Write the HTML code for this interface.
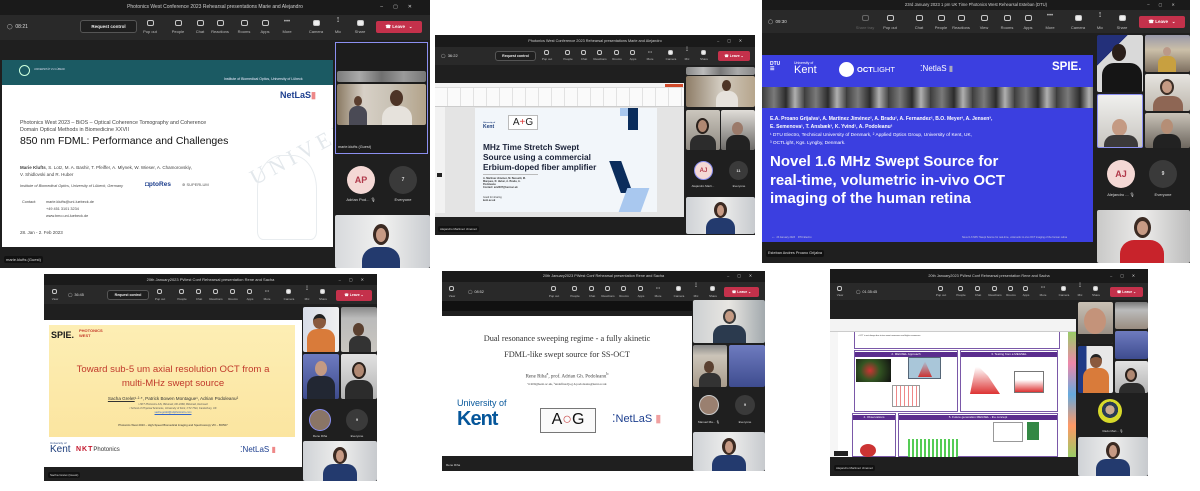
<!DOCTYPE html>
<html><head><meta charset="utf-8">
<style>
*{margin:0;padding:0;box-sizing:border-box}
body{width:1200px;height:491px;background:#fff;position:relative;overflow:hidden;font-family:"Liberation Sans",sans-serif}
.p{position:absolute;background:#1f1f1f;overflow:hidden}
.a{position:absolute}
.t{position:absolute;left:0;right:0;top:0;background:#1a1a1a;color:#cfcfcf;text-align:center;white-space:nowrap}
.bar{position:absolute;left:0;right:0;background:#292929}
.i{position:absolute;width:7px;height:6px;border:1px solid #c8c8c8;border-radius:2px;margin-left:-3px}
.l{position:absolute;font-size:4px;color:#bdbdbd;transform:translateX(-50%);white-space:nowrap;text-decoration:none;line-height:5px}
.lv{position:absolute;background:#c4314b;border-radius:2px;color:#fff;font-weight:bold;text-align:center}
.rc{position:absolute;border:1px solid #555;border-radius:3px;background:#1f1f1f;color:#eee;font-weight:bold;text-align:center;white-space:nowrap}
.v{position:absolute;overflow:hidden;border-radius:2px}
.hd{position:absolute;border-radius:50%}
.nm{position:absolute;background:#111;color:#ddd;white-space:nowrap;border-radius:2px;padding:0 2px}
.av{position:absolute;border-radius:50%;text-align:center;font-weight:bold}
.tl{position:absolute;font-size:4px;color:#ddd;transform:translateX(-50%);white-space:nowrap}
.w{position:absolute;white-space:nowrap}
</style></head><body>

<!-- PANEL 1 -->
<div class="p" style="left:0;top:0;width:430px;height:268px">
 <div class="t" style="height:15px;font-size:5px;line-height:15px">Photonics West Conference 2023 Rehearsal presentations Marie and Alejandro <span style="position:absolute;right:8px;letter-spacing:10px">–▢✕</span></div>
 <div class="bar" style="top:15px;height:25px"></div>
 <div class="w" style="left:7px;top:24px;font-size:5px;color:#ddd">◯ &nbsp;08:21</div>
 <div class="rc" style="left:80px;top:20px;width:57px;height:13px;font-size:4.5px;line-height:11px">Request control</div>
 <b class="i" style="left:150px;top:20px"></b><s class="l" style="left:150px;top:29px">Pop out</s>
 <b class="i" style="left:178px;top:20px"></b><s class="l" style="left:178px;top:29px">People</s>
 <b class="i" style="left:200px;top:20px"></b><s class="l" style="left:200px;top:29px">Chat</s>
 <b class="i" style="left:220px;top:20px"></b><s class="l" style="left:220px;top:29px">Reactions</s>
 <b class="i" style="left:244px;top:20px"></b><s class="l" style="left:244px;top:29px">Rooms</s>
 <b class="i" style="left:265px;top:20px"></b><s class="l" style="left:265px;top:29px">Apps</s>
 <s class="l" style="left:287px;top:20px;font-size:6px">•••</s><s class="l" style="left:287px;top:29px">More</s>
 <b class="i" style="left:316px;top:20px;background:#eee"></b><s class="l" style="left:316px;top:29px">Camera</s>
 <s class="l" style="left:338px;top:18px;font-size:7px">⟟</s><s class="l" style="left:338px;top:29px">Mic</s>
 <b class="i" style="left:360px;top:20px;background:#eee"></b><s class="l" style="left:360px;top:29px">Share</s>
 <div class="lv" style="left:376px;top:21px;width:46px;height:12px;font-size:4.5px;line-height:12px">☎ Leave &nbsp; ⌄</div>
 <div class="a" style="left:2px;top:60px;width:331px;height:187px;background:#fff;overflow:hidden">
  <div class="a" style="left:0;top:0;width:331px;height:25px;background:#1b5a63"></div>
  <div class="hd" style="left:17px;top:5px;width:11px;height:11px;border:1px solid #cfd;"></div>
  <div class="w" style="left:32px;top:8px;font-size:2.5px;color:#dde">UNIVERSITÄT ZU LÜBECK</div>
  <div class="w" style="left:222px;top:17px;font-size:3.5px;color:#eef">Institute of Biomedical Optics, University of Lübeck</div>
  <div class="w" style="left:278px;top:30px;font-size:9px;color:#1d3f8f;font-weight:bold">NetLaS<span style="color:#e88">▮</span></div>
  <div class="w" style="left:238px;top:60px;font-size:22px;color:#e3e8ec;font-family:'Liberation Serif',serif;transform:rotate(-28deg);letter-spacing:5px">UNIVERSITAS</div>
  <div class="a" style="left:255px;top:95px;width:60px;height:85px;border:1px solid #e8ecef;border-radius:40% 40% 10% 10%"></div>
  <div class="w" style="left:18px;top:60px;font-size:5.3px;color:#444;line-height:7px">Photonics West 2023 – BiOS – Optical Coherence Tomography and Coherence<br>Domain Optical Methods in Biomedicine XXVII</div>
  <div class="w" style="left:18px;top:75px;font-size:10.5px;color:#111">850 nm FDML: Performance and Challenges</div>
  <div class="w" style="left:18px;top:104px;font-size:4.5px;color:#444;line-height:7px"><b>Marie Klufts</b>, S. Lotz, M. A. Bashir, T. Pfeiffer, A. Mlynek, W. Wieser, A. Chamorovskiy,<br>V. Shidlovski and R. Huber</div>
  <div class="w" style="left:18px;top:124px;font-size:3.8px;color:#444;font-style:italic">Institute of Biomedical Optics, University of Lübeck, Germany</div>
  <div class="w" style="left:143px;top:121px;font-size:6.5px;color:#1a3c8c;font-weight:bold">◘ptoRes</div>
  <div class="w" style="left:180px;top:122px;font-size:4px;color:#555">⊚ SUPERLUM</div>
  <div class="w" style="left:20px;top:139px;font-size:3.8px;color:#444;line-height:7px">Contact:</div>
  <div class="w" style="left:44px;top:139px;font-size:3.8px;color:#444;line-height:7px">marie.klufts@uni-luebeck.de<br>+49 451 3101 3234<br>www.bmo.uni-luebeck.de</div>
  <div class="w" style="left:18px;top:170px;font-size:4.5px;color:#444">28. Jan - 2. Feb 2023</div>
 </div>
 <div class="nm" style="left:4px;top:256px;font-size:4px;line-height:7px">marie.klufts (Guest)</div>
 <div class="a" style="left:335px;top:42px;width:93px;height:112px;border:1px solid #8b8ff0;background:#1c1c1c"></div>
 <div class="v" style="left:337px;top:71px;width:89px;height:11px;background:linear-gradient(90deg,#7b7b7b,#aaa,#6f6f6f,#9a9a9a,#777)"></div>
 <div class="v" style="left:337px;top:84px;width:89px;height:41px;background:linear-gradient(90deg,#8a7a63,#d7d0c6 30%,#c9c2b5 60%,#b3a38a)">
  <div class="hd" style="left:17px;top:12px;width:8px;height:10px;background:#5a3e2e"></div>
  <div class="a" style="left:12px;top:22px;width:18px;height:20px;background:#4a4a55;border-radius:8px 8px 0 0"></div>
  <div class="hd" style="left:53px;top:6px;width:13px;height:16px;background:#4d3426"></div>
  <div class="a" style="left:45px;top:22px;width:30px;height:20px;background:#e6e2dc;border-radius:12px 12px 0 0"></div>
 </div>
 <div class="w" style="left:338px;top:145px;font-size:3.8px;color:#ddd">marie.klufts (Guest)</div>
 <div class="av" style="left:347px;top:166px;width:28px;height:28px;background:#f4d8d5;color:#b1394a;font-size:9px;line-height:28px">AP</div>
 <div class="av" style="left:389px;top:166px;width:28px;height:28px;background:#3a3a3a;color:#ddd;font-size:5px;line-height:28px">7</div>
 <div class="tl" style="left:361px;top:197px">Adrian Pod... 🎙</div>
 <div class="tl" style="left:403px;top:197px">Everyone</div>
 <div class="v" style="left:335px;top:215px;width:95px;height:53px;background:linear-gradient(90deg,#d7d9dc,#f1f1f0 50%,#c9ccd0)">
  <div class="hd" style="left:38px;top:9px;width:16px;height:21px;background:#3b2a22"></div>
  <div class="hd" style="left:41px;top:13px;width:10px;height:14px;background:#c79a84"></div>
  <div class="a" style="left:27px;top:32px;width:38px;height:22px;background:#233a6e;border-radius:14px 14px 0 0"></div>
 </div>
</div>

<!-- PANEL 2 -->
<div class="p" style="left:435px;top:35px;width:320px;height:200px">
 <div class="t" style="height:12px;font-size:3.8px;line-height:12px">Photonics West Conference 2023 Rehearsal presentations Marie and Alejandro<span style="position:absolute;right:5px;letter-spacing:8px">–▢✕</span></div>
 <div class="bar" style="top:12px;height:18px"></div>
 <div class="w" style="left:6px;top:18px;font-size:4px;color:#ddd">◯ &nbsp;36:22</div>
 <div class="rc" style="left:60px;top:16px;width:41px;height:10px;font-size:3.5px;line-height:8px">Request control</div>
 <b class="i" style="left:112px;top:15px;width:5px;height:5px"></b><s class="l" style="left:112px;top:22px;font-size:3px">Pop out</s>
 <b class="i" style="left:133px;top:15px;width:5px;height:5px"></b><s class="l" style="left:133px;top:22px;font-size:3px">People</s>
 <b class="i" style="left:149px;top:15px;width:5px;height:5px"></b><s class="l" style="left:149px;top:22px;font-size:3px">Chat</s>
 <b class="i" style="left:165px;top:15px;width:5px;height:5px"></b><s class="l" style="left:165px;top:22px;font-size:3px">Reactions</s>
 <b class="i" style="left:182px;top:15px;width:5px;height:5px"></b><s class="l" style="left:182px;top:22px;font-size:3px">Rooms</s>
 <b class="i" style="left:198px;top:15px;width:5px;height:5px"></b><s class="l" style="left:198px;top:22px;font-size:3px">Apps</s>
 <s class="l" style="left:215px;top:14px;font-size:4px">•••</s><s class="l" style="left:215px;top:22px;font-size:3px">More</s>
 <b class="i" style="left:236px;top:15px;width:5px;height:5px;background:#eee"></b><s class="l" style="left:236px;top:22px;font-size:3px">Camera</s>
 <s class="l" style="left:252px;top:13px;font-size:6px">⟟</s><s class="l" style="left:252px;top:22px;font-size:3px">Mic</s>
 <b class="i" style="left:269px;top:15px;width:5px;height:5px;background:#eee"></b><s class="l" style="left:269px;top:22px;font-size:3px">Share</s>
 <div class="lv" style="left:283px;top:16px;width:32px;height:10px;font-size:3.5px;line-height:10px">☎ Leave ⌄</div>
 <div class="a" style="left:0;top:48px;width:249px;height:134px;background:#e4e4e4">
  <div class="a" style="left:0;top:0;width:249px;height:5px;background:#f3f3f3;border-bottom:1px solid #ddd"></div>
  <div class="a" style="left:230px;top:1px;width:18px;height:3px;background:#d04a2a"></div>
  <div class="a" style="left:0;top:5px;width:249px;height:19px;background:#fafafa;border-bottom:1px solid #ccc;background-image:repeating-linear-gradient(90deg,transparent 0 12px,#e2e2e2 12px 13px)"></div>
  <div class="a" style="left:0;top:24px;width:10px;height:106px;background:#f2f2f2"></div>
  <div class="a" style="left:2px;top:90px;width:5px;height:4px;background:#222"></div>
  <div class="a" style="left:40px;top:25px;width:182px;height:104px;background:#f2f6fa">
   <div class="w" style="left:8px;top:12px;font-size:5px;color:#1c3c7a;font-weight:bold;line-height:4px"><span style="font-size:2px">University of</span><br>Kent</div>
   <div class="a" style="left:33px;top:7px;width:30px;height:15px;border:1px solid #bbb;background:#fff;font-size:10px;line-height:13px;text-align:center;color:#222">A<span style="color:#d33">+</span>G</div>
   <div class="w" style="left:8px;top:34px;font-size:8.3px;font-weight:bold;color:#1a2238;line-height:10px">MHz Time Stretch Swept<br>Source using a commercial<br>Erbium-doped fiber amplifier</div>
   <div class="a" style="left:8px;top:66px;width:55px;height:1px;background:#bbb"></div>
   <div class="w" style="left:8px;top:69px;font-size:2.5px;color:#333;line-height:3px;font-weight:bold">A. Martinez Jiménez, M. Bassetti, M.<br>Marques, R. Huber, A. Bradu, A.<br>Podoleanu<br>Contact: am2037@kent.ac.uk</div>
   <div class="w" style="left:8px;top:88px;font-size:2.5px;color:#333;line-height:3px">Good for sharing<br><b>kent.ac.uk</b></div>
   <div class="a" style="left:153px;top:0;width:10px;height:22px;background:#0b2d5c"></div>
   <div class="a" style="left:145px;top:0;width:8px;height:8px;background:#a9c8ef"></div>
   <div class="a" style="left:140px;top:53px;width:12px;height:32px;background:#0b2d5c;transform:skewX(20deg)"></div>
   <div class="a" style="left:148px;top:80px;width:22px;height:24px;background:#a9c8ef;transform:skewX(-20deg)"></div>
  </div>
 </div>
 <div class="nm" style="left:3px;top:191px;font-size:3px;line-height:6px">Alejandro Martinez Jiménez</div>
 <div class="v" style="left:251px;top:32px;width:69px;height:8px;background:linear-gradient(90deg,#888,#bbb,#777,#aaa,#888)"></div>
 <div class="v" style="left:251px;top:41px;width:69px;height:31px;background:linear-gradient(90deg,#8e7d67,#d2cbc0,#b6a58c)">
  <div class="hd" style="left:36px;top:4px;width:9px;height:11px;background:#4d3426"></div>
  <div class="a" style="left:30px;top:15px;width:22px;height:16px;background:#e6e2dc;border-radius:9px 9px 0 0"></div>
 </div>
 <div class="v" style="left:251px;top:75px;width:34px;height:40px;background:linear-gradient(#cbc6bd,#8f8a82)">
  <div class="hd" style="left:10px;top:8px;width:13px;height:16px;background:#b08872;border:2px solid #2a211c"></div>
  <div class="a" style="left:4px;top:25px;width:26px;height:15px;background:#2c2c2c;border-radius:9px 9px 0 0"></div>
 </div>
 <div class="v" style="left:286px;top:75px;width:34px;height:40px;background:linear-gradient(#e0ddd8,#6d6b68)">
  <div class="hd" style="left:11px;top:12px;width:11px;height:13px;background:#9b7a6a"></div>
  <div class="a" style="left:5px;top:25px;width:24px;height:15px;background:#222;border-radius:9px 9px 0 0"></div>
 </div>
 <div class="av" style="left:259px;top:126px;width:19px;height:19px;background:#f4d8d5;color:#b1394a;font-size:6px;line-height:19px;border:1px solid #8b8ff0">AJ</div>
 <div class="av" style="left:294px;top:126px;width:19px;height:19px;background:#3a3a3a;color:#ddd;font-size:4px;line-height:19px">11</div>
 <div class="tl" style="left:268px;top:149px;font-size:3px">Alejandro Marti...</div>
 <div class="tl" style="left:304px;top:149px;font-size:3px">Everyone</div>
 <div class="v" style="left:251px;top:162px;width:69px;height:37px;background:linear-gradient(90deg,#cfd2d6,#eeeeed,#c7cace)">
  <div class="hd" style="left:28px;top:5px;width:13px;height:16px;background:#3b2a22"></div>
  <div class="hd" style="left:31px;top:8px;width:7px;height:11px;background:#c79a84"></div>
  <div class="a" style="left:20px;top:21px;width:29px;height:16px;background:#233a6e;border-radius:10px 10px 0 0"></div>
 </div>
</div>

<!-- PANEL 3 -->
<div class="p" style="left:762px;top:0;width:428px;height:263px">
 <div class="t" style="height:10px;font-size:4.2px;line-height:10px">23rd January 2023 1 pm UK Time Photonics West Rehearsal Esteban (DTU)<span style="position:absolute;right:6px;letter-spacing:9px">–▢✕</span></div>
 <div class="bar" style="top:10px;height:23px"></div>
 <div class="w" style="left:6px;top:19px;font-size:4.5px;color:#ddd">◯ &nbsp;09:30</div>
 <b class="i" style="left:103px;top:15px;border-color:#666"></b><s class="l" style="left:103px;top:25px;color:#666">Share tray</s>
 <b class="i" style="left:128px;top:15px"></b><s class="l" style="left:128px;top:25px">Pop out</s>
 <b class="i" style="left:157px;top:15px"></b><s class="l" style="left:157px;top:25px">Chat</s>
 <b class="i" style="left:179px;top:15px"></b><s class="l" style="left:179px;top:25px">People</s>
 <b class="i" style="left:199px;top:15px"></b><s class="l" style="left:199px;top:25px">Reactions</s>
 <b class="i" style="left:222px;top:15px"></b><s class="l" style="left:222px;top:25px">View</s>
 <b class="i" style="left:245px;top:15px"></b><s class="l" style="left:245px;top:25px">Rooms</s>
 <b class="i" style="left:266px;top:15px"></b><s class="l" style="left:266px;top:25px">Apps</s>
 <s class="l" style="left:288px;top:14px;font-size:6px">•••</s><s class="l" style="left:288px;top:25px">More</s>
 <b class="i" style="left:316px;top:15px;background:#eee"></b><s class="l" style="left:316px;top:25px">Camera</s>
 <s class="l" style="left:338px;top:13px;font-size:7px">⟟</s><s class="l" style="left:338px;top:25px">Mic</s>
 <b class="i" style="left:360px;top:15px;background:#eee"></b><s class="l" style="left:360px;top:25px">Share</s>
 <div class="lv" style="left:377px;top:16px;width:46px;height:12px;font-size:4.5px;line-height:12px">☎ Leave &nbsp; ⌄</div>
 <div class="a" style="left:0;top:55px;width:331px;height:187px;background:#3b3fe0;overflow:hidden">
  <div class="w" style="left:8px;top:7px;font-size:5px;color:#fff;font-weight:bold;line-height:5px">DTU<br>☰</div>
  <div class="w" style="left:32px;top:6px;font-size:3.5px;color:#fff;line-height:4px">University of<br><span style="font-size:11px;line-height:11px">Kent</span></div>
  <div class="hd" style="left:77px;top:7px;width:15px;height:15px;background:#fff"></div>
  <div class="w" style="left:95px;top:10px;font-size:7.5px;color:#fff;font-weight:bold">OCT<span style="font-weight:normal">LIGHT</span></div>
  <div class="w" style="left:158px;top:9px;font-size:8px;color:#fff">⁚NetlaS <span style="color:#aab">▮</span></div>
  <div class="w" style="left:290px;top:6px;font-size:11.5px;color:#fff;font-weight:bold">SPIE.</div>
  <div class="a" style="left:0;top:32px;width:331px;height:21px;background:repeating-linear-gradient(90deg,#3c3c3c 0,#7a7a7a 12px,#2b2b2b 24px,#b0b0b0 33px,#4a4a4a 42px)"></div>
  <div class="w" style="left:8px;top:60px;font-size:5px;color:#fff;font-weight:bold;line-height:8px">E.A. Proano Grijalva¹, A. Martinez Jiménez², A. Bradu², A. Fernandez², B.O. Meyer³, A. Jensen³,<br>E. Semenova¹, T. Ansbæk³, K. Yvind¹, A. Podoleanu²</div>
  <div class="w" style="left:8px;top:77px;font-size:4.8px;color:#fff;line-height:7.5px">¹ DTU Electro, Technical University of Denmark, ² Applied Optics Group, University of Kent, UK,<br>³ OCTLight, Kgs. Lyngby, Denmark.</div>
  <div class="w" style="left:8px;top:98px;font-size:15px;color:#fff;font-weight:bold;line-height:18.5px">Novel 1.6 MHz Swept Source for<br>real-time, volumetric in-vivo OCT<br>imaging of the human retina</div>
  <div class="w" style="left:10px;top:181px;font-size:2.5px;color:#ccd">‹ › &nbsp; 23 January 2023 &nbsp;&nbsp; DTU Electro</div>
  <div class="w" style="left:200px;top:181px;font-size:2.5px;color:#ccd">Novel 1.6 MHz Swept Source for real-time, volumetric in-vivo OCT imaging of the human retina</div>
 </div>
 <div class="nm" style="left:4px;top:250px;font-size:3.8px;line-height:7px">Esteban Andres Proano Grijalva</div>
 <div class="v" style="left:335px;top:35px;width:46px;height:57px;background:linear-gradient(135deg,#23307a 0 30%,#d9d9d9 30%)">
  <div class="hd" style="left:15px;top:9px;width:14px;height:17px;background:#2a1f1a"></div>
  <div class="a" style="left:5px;top:28px;width:40px;height:30px;background:#151515;border-radius:12px 12px 0 0"></div>
 </div>
 <div class="v" style="left:383px;top:35px;width:45px;height:37px;background:linear-gradient(#99a,#cbbfa8 40%,#7d6f60)">
  <div class="hd" style="left:18px;top:12px;width:8px;height:9px;background:#b98"></div>
  <div class="a" style="left:13px;top:21px;width:18px;height:16px;background:#c8a040;border-radius:7px 7px 0 0"></div>
 </div>
 <div class="v" style="left:383px;top:74px;width:45px;height:37px;background:linear-gradient(#e6e4e0,#bdb7ad)">
  <div class="hd" style="left:15px;top:5px;width:14px;height:16px;background:#c49a83;border:2px solid #3b2e26"></div>
  <div class="a" style="left:8px;top:22px;width:30px;height:15px;background:#8e6654;border-radius:10px 10px 0 0"></div>
 </div>
 <div class="v" style="left:335px;top:94px;width:46px;height:54px;border:1px solid #8b8ff0;background:linear-gradient(#f0f0ee,#c8c5c0)">
  <div class="hd" style="left:14px;top:24px;width:15px;height:17px;background:#c49a83"></div>
  <div class="a" style="left:6px;top:40px;width:34px;height:15px;background:#3c3a3a;border-radius:10px 10px 0 0"></div>
 </div>
 <div class="v" style="left:383px;top:113px;width:45px;height:35px;background:linear-gradient(#c9c3b8,#6d665e)">
  <div class="hd" style="left:16px;top:6px;width:12px;height:15px;background:#b58e76"></div>
  <div class="a" style="left:8px;top:21px;width:28px;height:14px;background:#222;border-radius:10px 10px 0 0"></div>
 </div>
 <div class="av" style="left:345px;top:160px;width:28px;height:28px;background:#f4d8d5;color:#b1394a;font-size:9px;line-height:28px">AJ</div>
 <div class="av" style="left:387px;top:160px;width:28px;height:28px;background:#3a3a3a;color:#ddd;font-size:5px;line-height:28px">9</div>
 <div class="tl" style="left:359px;top:192px">Alejandro ... 🎙</div>
 <div class="tl" style="left:401px;top:192px">Everyone</div>
 <div class="v" style="left:335px;top:210px;width:93px;height:53px;background:linear-gradient(90deg,#c9c9c8,#ecebea 50%,#bcbcbc)">
  <div class="hd" style="left:37px;top:7px;width:17px;height:21px;background:#3b2a22"></div>
  <div class="hd" style="left:40px;top:11px;width:11px;height:14px;background:#c79a84"></div>
  <div class="a" style="left:23px;top:30px;width:44px;height:24px;background:#c8232b;border-radius:14px 14px 0 0"></div>
 </div>
</div>

<!-- PANEL 4 -->
<div class="p" style="left:44px;top:274px;width:333px;height:207px">
 <div class="t" style="height:11px;font-size:4px;line-height:11px">20th January2023 PWest Conf Rehearsal presentation Rene and Sacha<span style="position:absolute;right:5px;letter-spacing:8px">–▢✕</span></div>
 <div class="bar" style="top:11px;height:19px"></div>
 <b class="i" style="left:11px;top:15px;width:5px;height:5px"></b><s class="l" style="left:11px;top:23px;font-size:3px">View</s>
 <div class="w" style="left:24px;top:18px;font-size:3.8px;color:#ddd">◯ &nbsp;36:45</div>
 <div class="rc" style="left:63px;top:16px;width:42px;height:10px;font-size:3.5px;line-height:8px">Request control</div>
 <b class="i" style="left:116px;top:15px;width:5px;height:5px"></b><s class="l" style="left:116px;top:23px;font-size:3px">Pop out</s>
 <b class="i" style="left:138px;top:15px;width:5px;height:5px"></b><s class="l" style="left:138px;top:23px;font-size:3px">People</s>
 <b class="i" style="left:155px;top:15px;width:5px;height:5px"></b><s class="l" style="left:155px;top:23px;font-size:3px">Chat</s>
 <b class="i" style="left:172px;top:15px;width:5px;height:5px"></b><s class="l" style="left:172px;top:23px;font-size:3px">Reactions</s>
 <b class="i" style="left:189px;top:15px;width:5px;height:5px"></b><s class="l" style="left:189px;top:23px;font-size:3px">Rooms</s>
 <b class="i" style="left:206px;top:15px;width:5px;height:5px"></b><s class="l" style="left:206px;top:23px;font-size:3px">Apps</s>
 <s class="l" style="left:223px;top:14px;font-size:4px">•••</s><s class="l" style="left:223px;top:23px;font-size:3px">More</s>
 <b class="i" style="left:245px;top:15px;width:5px;height:5px;background:#eee"></b><s class="l" style="left:245px;top:23px;font-size:3px">Camera</s>
 <s class="l" style="left:263px;top:13px;font-size:6px">⟟</s><s class="l" style="left:263px;top:23px;font-size:3px">Mic</s>
 <b class="i" style="left:279px;top:15px;width:5px;height:5px;background:#eee"></b><s class="l" style="left:279px;top:23px;font-size:3px">Share</s>
 <div class="lv" style="left:292px;top:16px;width:36px;height:11px;font-size:3.5px;line-height:11px">☎ Leave ⌄</div>
 <div class="a" style="left:0;top:46px;width:258px;height:147px;background:#fff">
  <div class="a" style="left:5px;top:5px;width:246px;height:112px;background:linear-gradient(#fdeeb4,#fbe5a0)"></div>
  <div class="w" style="left:7px;top:10px;font-size:9px;font-weight:bold;color:#1a1a1a">SPIE.</div>
  <div class="w" style="left:35px;top:9px;font-size:4px;font-weight:bold;color:#c43a2a;line-height:4.5px">PHOTONICS<br>WEST</div>
  <div class="w" style="left:0;width:258px;text-align:center;top:43px;font-size:9.6px;color:#c0392b;line-height:14px">Toward sub-5 um axial resolution OCT from a<br>multi-MHz swept source</div>
  <div class="w" style="left:0;width:258px;text-align:center;top:76px;font-size:4.6px;color:#333"><u>Sacha Grelet</u>¹·²·*, Patrick Bowen Montague¹, Adrian Podoleanu²</div>
  <div class="w" style="left:0;width:258px;text-align:center;top:83px;font-size:2.6px;color:#555;line-height:4px;font-style:italic">¹ NKT Photonics A/S, Birkerød, DK-3460, Birkerød, Denmark<br>² School of Physical Sciences, University of Kent, CT2 7NH, Canterbury, UK<br><u style="color:#36c">sacha.grelet@nktphotonics.com</u></div>
  <div class="w" style="left:0;width:258px;text-align:center;top:103px;font-size:2.8px;color:#333">Photonics West 2023 – High-Speed Biomedical Imaging and Spectroscopy VIII – BO507</div>
  <div class="w" style="left:6px;top:122px;font-size:3px;color:#1c3c7a;line-height:3px">University of<br><span style="font-size:10px;line-height:10px">Kent</span></div>
  <div class="w" style="left:32px;top:126px;font-size:7px;color:#c4172c;font-weight:bold;letter-spacing:1px">NKT<span style="color:#333;font-weight:normal;font-size:6px;letter-spacing:0">Photonics</span></div>
  <div class="w" style="left:196px;top:125px;font-size:8px;color:#1d3f8f">⁚NetLaS <span style="color:#e88">▮</span></div>
 </div>
 <div class="nm" style="left:4px;top:198px;font-size:3px;line-height:6px">Sacha Grelet (Guest)</div>
 <div class="v" style="left:259px;top:33px;width:36px;height:45px;background:linear-gradient(90deg,#d8dde8,#f0f0f0)">
  <div class="hd" style="left:10px;top:7px;width:13px;height:15px;background:#8a5a3e;border-top:4px solid #222"></div>
  <div class="a" style="left:4px;top:22px;width:28px;height:23px;background:#d97b3a;border-radius:10px 10px 0 0"></div>
 </div>
 <div class="v" style="left:297px;top:33px;width:36px;height:45px;background:linear-gradient(#888,#bbb 25%,#c9c6c0)">
  <div class="hd" style="left:12px;top:16px;width:11px;height:13px;background:#5a4030"></div>
  <div class="a" style="left:8px;top:29px;width:22px;height:16px;background:#333;border-radius:8px 8px 0 0"></div>
 </div>
 <div class="v" style="left:259px;top:80px;width:36px;height:45px;background:linear-gradient(#6e7bbf,#3e4c8f)">
  <div class="hd" style="left:12px;top:7px;width:12px;height:15px;background:#c49a83"></div>
  <div class="a" style="left:4px;top:22px;width:28px;height:23px;background:#222733;border-radius:10px 10px 0 0"></div>
 </div>
 <div class="v" style="left:297px;top:80px;width:36px;height:45px;background:linear-gradient(#e2e2e2,#b3b3b3)">
  <div class="hd" style="left:11px;top:8px;width:14px;height:17px;background:#b08872;border:2px solid #2a211c"></div>
  <div class="a" style="left:4px;top:26px;width:28px;height:19px;background:#2c2c2c;border-radius:10px 10px 0 0"></div>
 </div>
 <div class="av" style="left:265px;top:135px;width:22px;height:22px;background:#8a7566;border:1px solid #8b8ff0"></div>
 <div class="av" style="left:302px;top:135px;width:22px;height:22px;background:#3a3a3a;color:#ddd;font-size:4px;line-height:22px">9</div>
 <div class="tl" style="left:276px;top:160px;font-size:3px">Rene Riha</div>
 <div class="tl" style="left:313px;top:160px;font-size:3px">Everyone</div>
 <div class="v" style="left:259px;top:167px;width:74px;height:40px;background:linear-gradient(90deg,#cfd2d6,#eeeeed,#c7cace)">
  <div class="hd" style="left:30px;top:6px;width:14px;height:17px;background:#3b2a22"></div>
  <div class="hd" style="left:33px;top:9px;width:8px;height:12px;background:#c79a84"></div>
  <div class="a" style="left:20px;top:23px;width:34px;height:17px;background:#233a6e;border-radius:10px 10px 0 0"></div>
 </div>
</div>

<!-- PANEL 5 -->
<div class="p" style="left:442px;top:271px;width:323px;height:200px">
 <div class="t" style="height:11px;font-size:3.8px;line-height:11px">20th January2023 PWest Conf Rehearsal presentation Rene and Sacha<span style="position:absolute;right:5px;letter-spacing:8px">–▢✕</span></div>
 <div class="bar" style="top:11px;height:19px"></div>
 <b class="i" style="left:10px;top:15px;width:5px;height:5px"></b><s class="l" style="left:10px;top:23px;font-size:3px">View</s>
 <div class="w" style="left:26px;top:18px;font-size:3.8px;color:#ddd">◯ &nbsp;08:52</div>
 <b class="i" style="left:112px;top:15px;width:5px;height:5px"></b><s class="l" style="left:112px;top:23px;font-size:3px">Pop out</s>
 <b class="i" style="left:133px;top:15px;width:5px;height:5px"></b><s class="l" style="left:133px;top:23px;font-size:3px">People</s>
 <b class="i" style="left:150px;top:15px;width:5px;height:5px"></b><s class="l" style="left:150px;top:23px;font-size:3px">Chat</s>
 <b class="i" style="left:166px;top:15px;width:5px;height:5px"></b><s class="l" style="left:166px;top:23px;font-size:3px">Reactions</s>
 <b class="i" style="left:182px;top:15px;width:5px;height:5px"></b><s class="l" style="left:182px;top:23px;font-size:3px">Rooms</s>
 <b class="i" style="left:199px;top:15px;width:5px;height:5px"></b><s class="l" style="left:199px;top:23px;font-size:3px">Apps</s>
 <s class="l" style="left:216px;top:14px;font-size:4px">•••</s><s class="l" style="left:216px;top:23px;font-size:3px">More</s>
 <b class="i" style="left:237px;top:15px;width:5px;height:5px;background:#eee"></b><s class="l" style="left:237px;top:23px;font-size:3px">Camera</s>
 <s class="l" style="left:254px;top:13px;font-size:6px">⟟</s><s class="l" style="left:254px;top:23px;font-size:3px">Mic</s>
 <b class="i" style="left:271px;top:15px;width:5px;height:5px;background:#eee"></b><s class="l" style="left:271px;top:23px;font-size:3px">Share</s>
 <div class="lv" style="left:282px;top:16px;width:35px;height:10px;font-size:3.5px;line-height:10px">☎ Leave ⌄</div>
 <div class="a" style="left:0;top:30px;width:250px;height:10px;background:#111"></div>
 <div class="a" style="left:0;top:45px;width:250px;height:140px;background:#fff;font-family:'Liberation Serif',serif">
  <div class="w" style="left:0;width:250px;text-align:center;top:15px;font-size:8.3px;color:#333;line-height:16px">Dual resonance sweeping regime - a fully akinetic<br>FDML-like swept source for SS-OCT</div>
  <div class="w" style="left:0;width:250px;text-align:center;top:55px;font-size:5px;color:#444">Rene Riha<sup>a</sup>, prof. Adrian Gh. Podoleanu<sup>b</sup></div>
  <div class="w" style="left:0;width:250px;text-align:center;top:66px;font-size:3.3px;color:#444">ᵃrr400@kent.ac.uk, ᵇundefined[a.g.h.podoleanu@kent.ac.uk</div>
  <div class="w" style="left:15px;top:83px;font-family:'Liberation Sans',sans-serif;color:#05569a;font-size:9px;line-height:9px">University of<br><span style="font-size:20px;line-height:22px;letter-spacing:-1px;font-weight:bold">Kent</span></div>
  <div class="a" style="left:98px;top:92px;width:56px;height:25px;border:1px solid #777;background:#fafafa;text-align:center;font-family:'Liberation Sans',sans-serif;font-size:16px;line-height:22px;color:#111">A<span style="color:#c55">○</span>G</div>
  <div class="w" style="left:170px;top:96px;font-family:'Liberation Sans',sans-serif;font-size:11px;color:#1d3f8f">⁚NetLaS <span style="color:#f0a0a0">▮</span></div>
 </div>
 <div class="nm" style="left:2px;top:191px;font-size:3px;line-height:6px;background:none">Rene Riha</div>
 <div class="v" style="left:251px;top:29px;width:72px;height:43px;background:linear-gradient(90deg,#cdd0d2,#e8e6e2,#a2a9ad)">
  <div class="hd" style="left:30px;top:9px;width:13px;height:15px;background:#c49a83;border:2px solid #3a3a3a"></div>
  <div class="a" style="left:20px;top:25px;width:33px;height:18px;background:#2b3a4e;border-radius:10px 10px 0 0"></div>
 </div>
 <div class="v" style="left:251px;top:74px;width:34px;height:42px;background:linear-gradient(#888,#cbc4b8 25%,#a99c8c)">
  <div class="hd" style="left:11px;top:16px;width:10px;height:12px;background:#5a4030"></div>
  <div class="a" style="left:6px;top:28px;width:22px;height:14px;background:#333;border-radius:8px 8px 0 0"></div>
 </div>
 <div class="v" style="left:287px;top:74px;width:36px;height:42px;background:linear-gradient(#6e7bbf,#3e4c8f)"></div>
 <div class="av" style="left:257px;top:124px;width:20px;height:20px;background:#9a8070;border:1px solid #ccc"></div>
 <div class="av" style="left:293px;top:124px;width:20px;height:20px;background:#3a3a3a;color:#ddd;font-size:4px;line-height:20px">9</div>
 <div class="tl" style="left:267px;top:149px;font-size:3px">Manuel Ma... 🎙</div>
 <div class="tl" style="left:303px;top:149px;font-size:3px">Everyone</div>
 <div class="v" style="left:251px;top:161px;width:72px;height:39px;background:linear-gradient(90deg,#cfd2d6,#eeeeed,#c7cace)">
  <div class="hd" style="left:29px;top:6px;width:14px;height:17px;background:#3b2a22"></div>
  <div class="hd" style="left:32px;top:9px;width:8px;height:12px;background:#c79a84"></div>
  <div class="a" style="left:19px;top:23px;width:34px;height:16px;background:#233a6e;border-radius:10px 10px 0 0"></div>
 </div>
</div>

<!-- PANEL 6 -->
<div class="p" style="left:830px;top:269px;width:318px;height:207px">
 <div class="t" style="height:14px;font-size:3.8px;line-height:14px">20th January2023 PWest Conf Rehearsal presentation Rene and Sacha<span style="position:absolute;right:5px;letter-spacing:8px">–▢✕</span></div>
 <div class="bar" style="top:14px;height:17px"></div>
 <b class="i" style="left:10px;top:17px;width:5px;height:5px"></b><s class="l" style="left:10px;top:24px;font-size:3px">View</s>
 <div class="w" style="left:26px;top:20px;font-size:3.8px;color:#ddd">◯ &nbsp;01:35:45</div>
 <b class="i" style="left:111px;top:17px;width:5px;height:5px"></b><s class="l" style="left:111px;top:24px;font-size:3px">Pop out</s>
 <b class="i" style="left:131px;top:17px;width:5px;height:5px"></b><s class="l" style="left:131px;top:24px;font-size:3px">People</s>
 <b class="i" style="left:148px;top:17px;width:5px;height:5px"></b><s class="l" style="left:148px;top:24px;font-size:3px">Chat</s>
 <b class="i" style="left:165px;top:17px;width:5px;height:5px"></b><s class="l" style="left:165px;top:24px;font-size:3px">Reactions</s>
 <b class="i" style="left:181px;top:17px;width:5px;height:5px"></b><s class="l" style="left:181px;top:24px;font-size:3px">Rooms</s>
 <b class="i" style="left:196px;top:17px;width:5px;height:5px"></b><s class="l" style="left:196px;top:24px;font-size:3px">Apps</s>
 <s class="l" style="left:213px;top:15px;font-size:4px">•••</s><s class="l" style="left:213px;top:24px;font-size:3px">More</s>
 <b class="i" style="left:234px;top:17px;width:5px;height:5px;background:#eee"></b><s class="l" style="left:234px;top:24px;font-size:3px">Camera</s>
 <s class="l" style="left:250px;top:15px;font-size:6px">⟟</s><s class="l" style="left:250px;top:24px;font-size:3px">Mic</s>
 <b class="i" style="left:266px;top:17px;width:5px;height:5px;background:#eee"></b><s class="l" style="left:266px;top:24px;font-size:3px">Share</s>
 <div class="lv" style="left:280px;top:18px;width:33px;height:10px;font-size:3.5px;line-height:10px">☎ Leave ⌄</div>
 <div class="a" style="left:0;top:50px;width:246px;height:138px;background:#fff;overflow:hidden">
  <div class="a" style="left:0;top:0;width:246px;height:13px;background:#f3f3f3;border-bottom:1px solid #ccc"></div>
  <div class="a" style="left:0;top:13px;width:8px;height:125px;background:#f6f6f6"></div>
  <div class="a" style="left:238px;top:13px;width:8px;height:125px;background:linear-gradient(#9c6,#e8a,#6ad,#f96,#9c6)"></div>
  <div class="a" style="left:24px;top:13px;width:206px;height:17px;border:1px solid #7a58a8;border-top:none"></div>
  <div class="w" style="left:28px;top:16px;font-size:2px;color:#333">• OCT is not always due to too sweet resonance and higher resonance</div>
  <div class="a" style="left:24px;top:31px;width:104px;height:62px;border:1.5px solid #7a58a8"></div>
  <div class="a" style="left:25px;top:33px;width:102px;height:5px;background:#5b2d8e;color:#fff;font-size:3px;line-height:5px;text-align:center">2. MEGSEL Approach</div>
  <div class="a" style="left:26px;top:40px;width:35px;height:23px;background:radial-gradient(circle at 40% 50%,#c33,#352 40%,#111)"></div>
  <div class="a" style="left:78px;top:38px;width:33px;height:22px;background:#a9c6d9;border:1px solid #567"></div>
  <div class="a" style="left:88px;top:42px;width:14px;height:16px;background:linear-gradient(#a9c6d9,#c33);clip-path:polygon(0 100%,50% 0,100% 100%)"></div>
  <div class="a" style="left:62px;top:66px;width:28px;height:22px;border:1px solid #999;background:repeating-linear-gradient(90deg,#fff 0 3px,#e88 3px 4px)"></div>
  <div class="a" style="left:130px;top:31px;width:98px;height:62px;border:1.5px solid #7a58a8"></div>
  <div class="a" style="left:131px;top:33px;width:96px;height:5px;background:#5b2d8e;color:#fff;font-size:3px;line-height:5px;text-align:center">3. Testing from a MEGSEL</div>
  <div class="a" style="left:140px;top:45px;width:30px;height:30px;background:linear-gradient(#fff 10%,#d33);clip-path:polygon(0 100%,20% 0,60% 40%,100% 100%)"></div>
  <div class="a" style="left:184px;top:52px;width:30px;height:22px;border:1px solid #777;background:linear-gradient(#fff 40%,#d33)"></div>
  <div class="a" style="left:22px;top:94px;width:44px;height:44px;border:1.5px solid #7a58a8"></div>
  <div class="a" style="left:23px;top:96px;width:42px;height:5px;background:#5b2d8e;color:#fff;font-size:3px;line-height:5px;text-align:center">4. Observations</div>
  <div class="a" style="left:30px;top:125px;width:16px;height:13px;background:#c33;border-radius:50%"></div>
  <div class="a" style="left:68px;top:94px;width:160px;height:44px;border:1.5px solid #7a58a8"></div>
  <div class="a" style="left:69px;top:96px;width:158px;height:5px;background:#5b2d8e;color:#fff;font-size:3px;line-height:5px;text-align:center">5. Future generation MEGSEL - the concept</div>
  <div class="a" style="left:78px;top:120px;width:50px;height:18px;background:repeating-linear-gradient(90deg,#5c5 0 2px,#fff 2px 4px)"></div>
  <div class="a" style="left:163px;top:103px;width:30px;height:20px;border:1px solid #999"></div>
  <div class="a" style="left:197px;top:103px;width:12px;height:18px;background:#384"></div>
 </div>
 <div class="a" style="left:4px;top:182px;width:14px;height:5px;background:#222;font-size:2px;color:#ccc"></div>
 <div class="nm" style="left:4px;top:196px;font-size:3px;line-height:6px">Alejandro Martinez Jiménez</div>
 <div class="v" style="left:248px;top:33px;width:35px;height:42px;background:linear-gradient(#c9c0b4,#8d8278)">
  <div class="hd" style="left:6px;top:6px;width:22px;height:26px;background:#c4937a"></div>
  <div class="a" style="left:0;top:32px;width:35px;height:10px;background:#222"></div>
 </div>
 <div class="v" style="left:285px;top:33px;width:33px;height:27px;background:linear-gradient(#777,#bbb 30%,#998c80)"></div>
 <div class="v" style="left:285px;top:62px;width:33px;height:28px;background:linear-gradient(#6e7bbf,#3e4c8f)"></div>
 <div class="v" style="left:248px;top:77px;width:35px;height:47px;background:linear-gradient(90deg,#1f3a86 0 25%,#e8e8e8 25%)">
  <div class="hd" style="left:12px;top:8px;width:12px;height:14px;background:#8a5a3e;border-top:3px solid #222"></div>
  <div class="a" style="left:5px;top:22px;width:26px;height:25px;background:#d97b3a;border-radius:9px 9px 0 0"></div>
 </div>
 <div class="v" style="left:285px;top:92px;width:33px;height:32px;background:linear-gradient(#e2e2e2,#b3b3b3)">
  <div class="hd" style="left:10px;top:7px;width:12px;height:14px;background:#b08872;border:2px solid #2a211c"></div>
  <div class="a" style="left:4px;top:22px;width:26px;height:10px;background:#2c2c2c;border-radius:9px 9px 0 0"></div>
 </div>
 <div class="av" style="left:268px;top:130px;width:24px;height:24px;background:radial-gradient(circle at 50% 45%,#c9a98f 25%,#2a3a55 26% 45%,#d7d92a 46%)"></div>
 <div class="tl" style="left:283px;top:160px;font-size:3px">Radu Mari... 🎙</div>
 <div class="v" style="left:248px;top:168px;width:70px;height:39px;background:linear-gradient(90deg,#cfd2d6,#eeeeed,#c7cace)">
  <div class="hd" style="left:28px;top:5px;width:14px;height:17px;background:#3b2a22"></div>
  <div class="hd" style="left:31px;top:8px;width:8px;height:12px;background:#c79a84"></div>
  <div class="a" style="left:18px;top:22px;width:34px;height:17px;background:#233a6e;border-radius:10px 10px 0 0"></div>
 </div>
</div>

</body></html>
